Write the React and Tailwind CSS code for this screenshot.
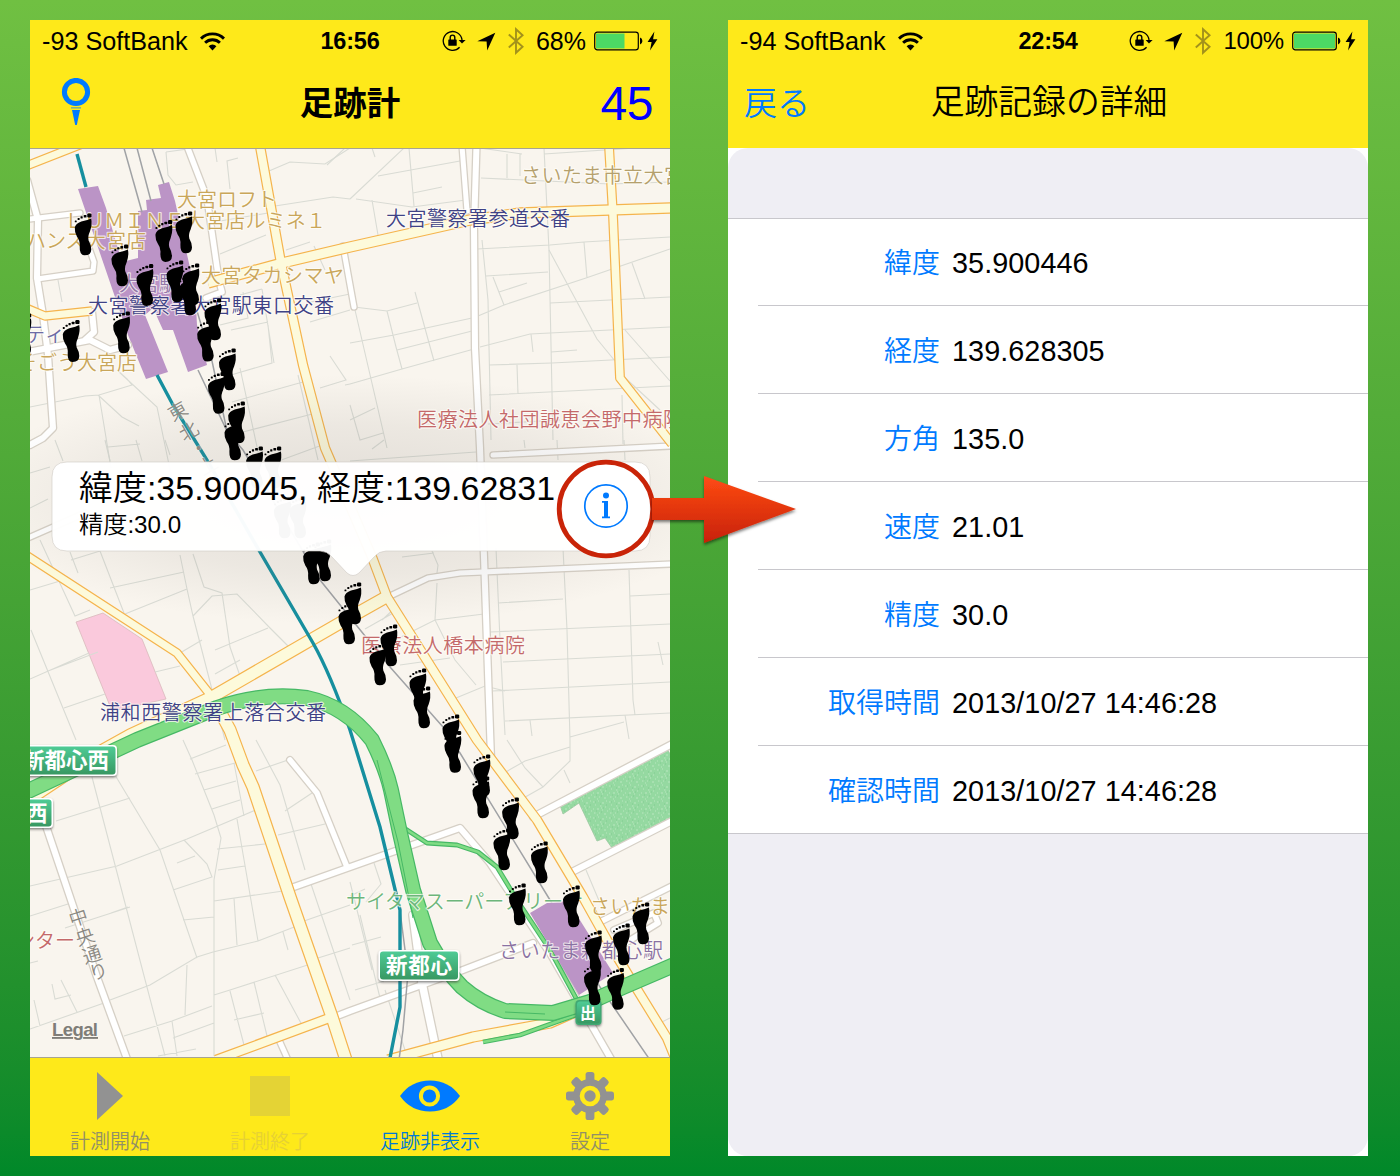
import React from "react";

const CJK = "font-['Liberation_Sans','Noto_Sans_CJK_JP',sans-serif]";

/* ---------- Status bar ---------- */

function Wifi() {
  return (
    <svg width="25" height="19" viewBox="0 0 25 19" className="ml-3 shrink-0">
      <g fill="none" stroke="#000" strokeWidth="2.9">
        <path d="M1 6.6A16.4 16.4 0 0 1 24 6.6" />
        <path d="M5.1 10.7A10.6 10.6 0 0 1 19.9 10.7" />
      </g>
      <path d="M8.6 14.2A5.6 5.6 0 0 1 16.4 14.2L12.5 18.4Z" />
    </svg>
  );
}

function RotationLock() {
  return (
    <svg width="24" height="22" viewBox="0 0 24 22" className="shrink-0">
      <path d="M17.6 17.3A9.4 9.4 0 1 1 20 10" fill="none" stroke="#000" strokeWidth="1.3" />
      <path d="M16.6 10H23.6L20 13.4Z" />
      <rect x="6.3" y="9.4" width="8.4" height="6.4" rx=".6" />
      <path d="M8.2 10V7.6A2.3 2.5 0 0 1 12.8 7.6V10" fill="none" stroke="#000" strokeWidth="1.4" />
    </svg>
  );
}

function StatusIcons({ percent, level }) {
  return (
    <div className="flex h-8 items-center justify-end">
      <RotationLock />
      <svg width="19" height="19" viewBox="0 0 19 19" className="ml-[11px] shrink-0">
        <path d="M.3 9.2L18.3.8L10.2 18.4L9.6 9.5Z" />
      </svg>
      <svg width="16" height="28" viewBox="0 0 16 28" className="ml-3 shrink-0">
        <path d="M.8 7.5L14.6 19.8L8 25.8V2.2L14.6 8.2L.8 20.5" fill="none" stroke="#a3921b" strokeWidth="1.9" />
      </svg>
      <span className={`ml-3 leading-8 ${percent.length > 3 ? "text-[24px] tracking-[-0.2px]" : "text-[25px]"}`}>{percent}</span>
      <svg width="50" height="20" viewBox="0 0 50 20" className="ml-2 shrink-0">
        <rect x=".7" y="1.2" width="43.6" height="17.6" rx="2.6" fill="none" stroke="#000" strokeWidth="1.2" />
        <rect x="2" y="2.5" width={level} height="15" fill="#4cd964" />
        <path d="M46 6.6A3.6 3.6 0 0 1 46 13.4Z" />
      </svg>
      <svg width="11" height="20" viewBox="0 0 11 20" className="ml-[3px] shrink-0">
        <path d="M7.4.6L.6 11H4.6L3 19.4L10.4 8.2H6.1Z" />
      </svg>
    </div>
  );
}

function StatusBar({ carrier, time, percent, level }) {
  return (
    <div className="grid h-10 grid-cols-[1fr_62px_1fr] items-center pl-3 pr-3 pt-[2px]">
      <div className="flex items-center">
        <span className="whitespace-nowrap text-[25.2px] leading-8">{carrier}</span>
        <Wifi />
      </div>
      <div className="whitespace-nowrap text-center text-[23.5px] font-bold leading-8 tracking-[-0.2px]">{time}</div>
      <StatusIcons percent={percent} level={level} />
    </div>
  );
}

/* ---------- Map data ---------- */

const minorStreets = [
  "M166 152L188 149M166 152L168 175L176 185L193 182M215 148L217 162M238 158L227 161L230 189M269 171L290 162L325 164L350 148",
  "M275 206L333 197L350 199M214 222L268 213M220 254L266 235M327 165L345 148",
  "M286 250L310 242M314 246L325 270M306 303L350 294M310 322L350 310M268 325L272 363L231 375M243 292L248 318L220 325M262 289L274 363M231 330L268 322M262 289L240 295M330 356L346 380L320 388M345 385L350 384",
  "M30 407L85 396L99 395L132 385L127 379L117 370L157 407L173 484M99 395L111 468M98 395L122 417L139 426M58 280L62 302M240 368L262 470M232 402L310 380M239 433L320 412M254 470L325 444M298 375L318 460",
  "M372 148L375 157M350 199L404 148M356 199L412 207L466 200M409 148L414 206M378 176L460 161M413 193L442 187M372 200L378 235M480 148L522 154M507 154V178M520 154L520 176M481 178L610 184L670 182M544 148L549 250L553 440M544 154L635 148",
  "M477 249L550 245L584 242L670 237M486 276L548 272M493 277L504 305L586 278L670 249M499 292L527 283M584 242L587 278M632 263L645 299M549 250L597 339L615 361M550 303L670 297M478 316L504 305M480 347L530 334L670 327M531 334L533 352M551 352L577 350M489 365L552 363L670 357M517 365L518 394M489 395L670 386M482 240L488 300L491 440M625 330L670 381M622 375L660 410M622 395L623 444M488 424L560 420",
  "M350 343L394 335L472 318M397 350L472 331M350 384L402 369L474 349M387 311L396 347L402 369M415 292L434 361M354 307L387 311L417 303M355 310L387 448M350 405L360 440L383 433M350 420L375 408",
  "M55 440L63 461M30 473L50 467M30 508L48 499M105 440L110 461M136 440L142 461M108 447L140 444M165 440L170 455M40 540L75 616L90 610M70 552L78 573M100 551L124 613M71 560L100 551M110 588L184 572M120 616L187 589M30 590L60 581M31 630L76 740M30 679L89 653M48 671L98 652M64 708L105 694M180 555L187 589L193 616L225 740M193 554L204 587L222 593L230 647L240 676M193 616L212 596L237 594L270 628L288 646M215 650L268 628M180 653L202 640M155 672L180 666M215 674L240 660",
  "M372 449L384 440M350 461L476 452M524 440L525 448M557 440L558 460M624 440L625 460M496 548L500 640L505 735M563 548L567 630L570 740M629 570L633 700L635 715M498 603L563 599M630 596L670 594M490 632L670 624M503 662L670 654M492 691L670 682M505 721L670 713M402 557L434 553M432 551L438 565L437 573M437 583L435 620L455 660L476 685M382 620L395 608M365 629L395 612M395 640L435 620L484 614M400 665L450 658M456 698L485 686L505 691M530 720L532 736M625 715L629 739M570 737L624 722M658 642L663 665",
  "M183 740L192 760L214 815L221 838L214 880V1056M190 759L226 745M195 774L235 763M204 790L236 781M212 809L240 800M234 763L244 816M56 821L130 798M92 777L165 1056M115 775L160 850L197 958M30 886L117 866L187 839L263 807M184 840L207 864L212 877L173 890M177 863L195 856M217 849L265 844M218 870L245 866M237 819L258 941M183 920L214 917M214 901L290 890M234 898L237 945M110 1000L150 985L197 957L213 952L258 941L302 924M111 913L128 907M30 916L68 904M65 928L130 907M187 965L185 1015M214 995L230 990L320 961M230 991L244 1045M254 982L268 1040M275 975L302 1025M234 1020L264 1013M124 1036L172 1021L212 1006M173 1038L214 1023M158 1056L196 1049M172 1021L177 1056M283 932L288 950M304 921L350 905M318 958L350 948M310 881L350 1000M256 740L280 785L305 870M256 771L288 760M278 835L325 824M285 811L312 793M30 963L38 961M52 984L55 999L71 995M61 980L77 1012M30 1029L104 1003M34 1000L40 1026",
  "M507 740L525 768L543 787L570 761V740M504 773L525 761L570 747M520 800L543 787M564 770L570 783M586 870L600 903M662 1022L670 1018M374 863L381 884L366 902M350 882L372 970M352 945L381 937M355 990L384 981M360 915L380 998M350 896L365 889M385 990L405 1050",
];

const whiteRoads = [
  ["M27 180L38 220L37 278L43 315L48 355L53 428L43 438L30 445", 6],
  ["M30 219L80 213", 5],
  ["M37 279L93 271L94 262L88 245", 5],
  ["M28 352L90 340L110 350L128 345M92 312L94 332L84 341", 6],
  ["M187 146L207 198L219 281L222 292L206 298", 5.5],
  ["M343 246L354 307", 5],
  ["M462 146L467 211", 5],
  ["M476.5 146L474 228L475 348L480 448L484 557L488 673L491 758", 6],
  ["M493 455L672 446", 5],
  ["M388 597L428 578L460 573L483 572L672 564", 5],
  ["M28 538L85 513", 5],
  ["M533 817L672 744", 6],
  ["M570 873L672 821", 6],
  ["M598 923L672 886M614 930L654 913L658 923L624 944", 5.5],
  ["M290 760L317 793L347 867", 5.5],
  ["M291 888L460 828L490 863L550 953L611 1059", 6],
  ["M332 1018L350 1011L463 970L533 943", 6],
  ["M413 915L422 983L438 1059", 7.5],
  ["M46 826L97 977L127 1059", 6],
  ["M279 1040L288 1060", 5],
];

const yellowRoads = [
  ["M26 166L95 139", 7],
  ["M260 146L281 263L303 365L325 448L372 557L387 597L477 740L537 820L583 897L607 940L627 973L667 1038L676 1060", 8],
  ["M208 283L282 263L350 247L470 220L520 213L610 210L672 208", 9],
  ["M609 146L613 215L620 378L672 444", 7.5],
  ["M26 308L45 316L92 311", 7],
  ["M26 555L177 653L212 697", 7],
  ["M28 800L103 750L130 735L212 697L340 623L388 596", 11],
  ["M212 697L230 730L243 765L253 787L290 897L332 1017L346 1060", 11],
  ["M216 1060L332 1017", 8],
  ["M388 1060L473 1037L550 1023L584 1008", 9],
];

const grayRails = [
  "M124 148L142 212", "M137 148L151 201", "M152 148L164 184",
  "M197 311L212 361L227 431", "M198 370L227 431L243 450L320 580L390 667L443 727L460 753L550 900L600 987L650 1060",
  "M400 911L408 973L403 1030L399 1060",
];

const footprints = [
  [14, 313], [74.3, 213], [111, 244], [136, 263.7], [155, 219.7], [175, 211], [166, 260], [182, 263],
  [179, 273], [204, 298], [196.7, 319.3], [218.5, 348], [207.5, 371.5], [227.7, 401], [224, 418],
  [62.3, 319.7], [112.7, 311], [245.7, 446], [264, 446], [273.5, 496], [289, 496], [302.7, 542],
  [314, 539], [344, 582], [338, 602], [380, 624], [369, 643], [409, 668], [413, 686], [442, 714],
  [444, 730.5], [473, 754], [472, 776], [501.7, 797], [493, 828], [530.5, 841], [508.5, 883],
  [562.5, 885], [584.5, 930], [612.5, 923], [632, 902], [583.5, 963], [606.7, 967.5],
];

const labels = [
  ["大宮ロフト", 177, 207, 100, "#c9a65a"],
  ["ＬＵＭＩＮＥ大宮店ルミネ１", 64, 228, 262, "#c9a65a"],
  ["ハンズ大宮店", 26, 247.5, 120, "#c9a65a"],
  ["大宮タカシマヤ", 201, 283, 143, "#c9a65a"],
  ["そごう大宮店", 17, 370, 120, "#c9a65a"],
  ["大宮駅", 119, 291, 60, "#9377a8"],
  ["ティ", 25, 342, 40, "#6d6ba6"],
  ["大宮警察署大宮駅東口交番", 88, 313, 246, "#3f4286"],
  ["さいたま市立大宮", 521, 182.5, 163, "#b5a06c"],
  ["大宮警察署参道交番", 386, 226, 184, "#3f4286"],
  ["医療法人社団誠恵会野中病院", 417, 427, 266, "#c4696a"],
  ["医療法人橋本病院", 361, 653, 164, "#c4696a"],
  ["浦和西警察署上落合交番", 100, 720, 226, "#3f4286"],
  ["サイタマスーパーアリーナ", 346, 909, 237, "#6db67b"],
  ["さいたま", 590, 913.5, 80, "#c9a65a"],
  ["さいたま新都心駅", 499, 958, 164, "#8a72a3"],
  ["ンター", 15, 947.5, 60, "#c4696a"],
];

const streetNames = [
  ["中", 78, 916, -18], ["央", 84.5, 935, -18], ["通", 91.5, 953, -18], ["り", 98, 970, -18],
  ["東", 177, 410, -30], ["北", 188, 430, -30], ["・", 198, 447, -30], ["上", 207, 464, -30],
];

const signs = [
  [6, 745, 111, 31, "新都心西", 23, 86],
  [-20, 798, 73, 30, "西", 26, 21],
  [378.5, 950, 81, 31, "新都心", 386, 66],
  [575.5, 1000, 26, 25, "出", 580, 16],
];

function MapView() {
  return (
    <svg width="640" height="908" viewBox="30 149 640 908" className="block bg-[#f9f5ee]">
      <defs>
        <linearGradient id="sign" x1="0" y1="0" x2="0" y2="1">
          <stop offset="0" stopColor="#4ecb95" />
          <stop offset="1" stopColor="#389862" />
        </linearGradient>
        <pattern id="grass" width="16" height="16" patternUnits="userSpaceOnUse">
          <rect width="16" height="16" fill="#95d9a1" />
          <path d="M1 2h1.5M6 1h1M10 3h2M14 1h1M3 5h1M8 6h1.5M13 7h1M1 9h1M5 9h2M10 10h1M15 11h1M2 13h1.5M7 13h1M12 14h2M5 15h1M9 8h1" stroke="#b9e7bf" strokeWidth="1.1" />
          <path d="M3 2h1M8 4h1M11 8h1M4 11h1M9 12h1M14 5h1" stroke="#82cb92" strokeWidth="1" />
        </pattern>
        <g id="foot">
          <path d="M16.9 5.4L13 7L7 8.6Q1.2 10.6 .5 14.6Q.2 20 2.6 23.5Q6 28 5.4 33.5Q5 42 10.2 42.3Q16.8 42.4 17 36.4Q16.8 31.6 14.3 27.5Q13.2 23.5 15.6 18.5Q18.2 11 16.9 5.4Z" />
          <rect x="13" y=".4" width="4.2" height="4" rx="1.2" />
          <rect x="9.4" y="2" width="2.8" height="2.6" rx=".6" />
          <rect x="6.2" y="3.3" width="2.2" height="2.2" rx=".5" />
          <rect x="3.3" y="5" width="2" height="2" rx=".5" />
          <rect x=".5" y="7.4" width="1.9" height="1.9" rx=".5" />
        </g>
        <radialGradient id="shade">
          <stop offset="0" stopColor="#6b6460" stopOpacity=".17" />
          <stop offset=".6" stopColor="#6b6460" stopOpacity=".09" />
          <stop offset="1" stopColor="#6b6460" stopOpacity="0" />
        </radialGradient>
        <filter id="signShadow" x="-20%" y="-20%" width="140%" height="150%">
          <feDropShadow dx="0" dy="1.5" stdDeviation="1" floodColor="#333" floodOpacity=".6" />
        </filter>
      </defs>

      <path d="M76 622L103 613L142 639L166 699L112 711Z" fill="#fac9dc" stroke="#d9b9bb" strokeWidth=".8" />
      <path d="M560 805L667 749L672 757V820L612 848L605 838L597 841L579 803L563 814Z" fill="url(#grass)" stroke="#9cc7a0" strokeWidth=".8" />
      <g fill="none" stroke="#d9dbd4" strokeWidth="1.1">
        {minorStreets.map((d) => <path key={d} d={d} />)}
      </g>
      <path d="M78 189L98 186L106 208L122 262L138 258V211L147 210L146 200L161 198L158 185L169 182L175 201L195 290L197 325L207 365L188 372L173 330H163L153 308L145 315L168 372L146 379L128 335Z" fill="#bb94c6" />

      <g fill="none" strokeLinecap="round" strokeLinejoin="round">
        {whiteRoads.map(([d, w]) => <path key={d} d={d} stroke="#d6d0c6" strokeWidth={w + 2.6} />)}
        {whiteRoads.map(([d, w]) => <path key={d} d={d} stroke="#fff" strokeWidth={w} />)}
      </g>
      <g fill="none" strokeLinejoin="round">
        {yellowRoads.map(([d, w]) => <path key={d} d={d} stroke="#f5b44d" strokeWidth={w + 2.4} />)}
        {yellowRoads.map(([d, w]) => <path key={d} d={d} stroke="#fdfadb" strokeWidth={w} />)}
      </g>
      <g fill="none" stroke="#a0a2a5" strokeWidth="1.5">
        {grayRails.map((d) => <path key={d} d={d} />)}
      </g>
      <g fill="none" stroke="#168f9f" strokeWidth="3.4">
        <path d="M77 154L86 187" />
        <path d="M157 375Q165 390 173 405L207 460L260 552L313 643Q330 673 350 730L380 827L400 910V1007L390 1058" />
      </g>
      <g fill="none" strokeLinejoin="round">
        <path d="M404 828L427 843L457 845L478 852L497 867L517 900L550 950L577 1000M584 1012L520 1035L483 1042" stroke="#46b865" strokeWidth="4.8" />
        <path d="M404 828L427 843L457 845L478 852L497 867L517 900L550 950L577 1000M584 1012L520 1035L483 1042" stroke="#80dc84" strokeWidth="2.6" />
        <path d="M26 792L137 740L217 708Q263 692 307 698Q345 706 372 740Q386 768 391 790L400 833L413 890L430 943Q445 970 462 987Q480 1003 505 1011L553 1013L590 1002L623 987L674 965" stroke="#46b865" strokeWidth="16" />
        <path d="M26 792L137 740L217 708Q263 692 307 698Q345 706 372 740Q386 768 391 790L400 833L413 890L430 943Q445 970 462 987Q480 1003 505 1011L553 1013L590 1002L623 987L674 965" stroke="#80dc84" strokeWidth="13.6" />
        <path d="M377 760L398 842L413 918M505 1012L545 1014" stroke="#46b865" strokeWidth="1" />
      </g>
      <path d="M530 913L547 903L568 901L613 973L579 995Z" fill="#bb94c6" />

      <ellipse cx="350" cy="500" rx="390" ry="125" fill="url(#shade)" />

      <g className="font-['Noto_Sans_CJK_JP',sans-serif]" fontSize="20" fontWeight="350" stroke="#fffdf8" strokeOpacity=".75" strokeWidth="2.2" strokeLinejoin="round" paintOrder="stroke">
        {labels.map(([text, x, y, w, color]) => (
          <text key={text} x={x} y={y} textLength={w} fill={color}>{text}</text>
        ))}
        {streetNames.map(([text, x, y, a]) => (
          <text key={text} x={x} y={y} fontSize="19" fill="#8b8983" textAnchor="middle" dominantBaseline="central" strokeOpacity=".4" strokeWidth="1.5" transform={`rotate(${a} ${x} ${y})`}>{text}</text>
        ))}
      </g>

      <g className="font-['Noto_Sans_CJK_JP',sans-serif]" fontWeight="700">
        {signs.map(([x, y, w, h, text, tx, tw]) => (
          <g key={text}>
            <rect x={x} y={y} width={w} height={h} rx="4" fill={text === "出" ? "#3fa873" : "#fff"} filter="url(#signShadow)" />
            <rect x={x + 1.5} y={y + 1.5} width={w - 3} height={h - 3} rx="3" fill="url(#sign)" />
            <text x={tx} y={y + h / 2 + (text === "出" ? 6 : 7.5)} fontSize={text === "出" ? 16 : 21.5} textLength={tw} fill="#fff">{text}</text>
          </g>
        ))}
      </g>

      <g>
        {footprints.map(([x, y]) => <use key={`${x}-${y}`} href="#foot" x={x} y={y} />)}
      </g>
      <text x="52" y="1036" textLength="46" fontSize="18.5" fontWeight="700" fill="#7f7d78" textDecoration="underline" className="font-['Liberation_Sans',sans-serif]">Legal</text>
    </svg>
  );
}

function Callout() {
  return (
    <div className="absolute left-[22px] top-[313px] h-[89px] w-[598px]">
      <svg width="598" height="116" viewBox="0 0 598 116" className="absolute left-0 top-0 overflow-visible">
        <path d="M15 0H583Q598 0 598 15V74Q598 89 583 89H334Q327 89 322 95L307 111Q301 116 295 111L280 95Q275 89 268 89H15Q0 89 0 74V15Q0 0 15 0Z" fill="#fff" fillOpacity=".97" stroke="#cfc9c3" strokeWidth=".6" />
      </svg>
      <div className="relative flex h-full flex-col pl-[27px] font-[350] text-black">
        <div className="mt-[6px] h-10 whitespace-nowrap text-[33.9px] leading-10 tracking-[0.05px]">緯度:35.90045, 経度:139.62831</div>
        <div className="mt-px h-8 whitespace-nowrap text-[24.2px] leading-8">精度:30.0</div>
      </div>
    </div>
  );
}

/* ---------- Tab bar ---------- */

function Gear() {
  return (
    <svg width="48" height="48" viewBox="-24 -24 48 48">
      <g fill="#929292">
        {[0, 45, 90, 135, 180, 225, 270, 315].map((a) => (
          <rect key={a} x="-4.4" y={a % 90 ? -23.6 : -24} width="8.8" height="12" rx="2.6" transform={`rotate(${a})`} />
        ))}
        <circle r="17" />
      </g>
      <circle r="8" fill="none" stroke="#fee91a" strokeWidth="4.6" />
    </svg>
  );
}

const tabs = [
  {
    label: "計測開始", color: "text-[#929066]",
    icon: <svg width="48" height="48" viewBox="0 0 48 48"><path d="M11 0L37 24L11 48Z" fill="#929292" /></svg>,
  },
  {
    label: "計測終了", color: "text-[#e6d134]",
    icon: <div className="h-10 w-10 bg-[#e4d335]" />,
  },
  {
    label: "足跡非表示", color: "text-[#007ad6]",
    icon: (
      <svg width="60" height="48" viewBox="0 0 60 48">
        <path d="M0 24Q11 8.5 30 8.5T60 24Q49 39.5 30 39.5T0 24Z" fill="#007aff" />
        <circle cx="29.5" cy="24" r="8.6" fill="none" stroke="#fee91a" strokeWidth="4" />
      </svg>
    ),
  },
  { label: "設定", color: "text-[#929066]", icon: <Gear /> },
];

function TabBar() {
  return (
    <div className="grid h-[99px] grid-cols-4 border-t border-[#a8a491] bg-[#fee91a]">
      {tabs.map((t) => (
        <div key={t.label} className="flex flex-col items-center pt-[14px]">
          <div className="flex h-12 items-center justify-center">{t.icon}</div>
          <div className={`mt-2 whitespace-nowrap text-[20px] font-[350] leading-7 ${t.color}`}>{t.label}</div>
        </div>
      ))}
    </div>
  );
}

/* ---------- Screens ---------- */

function MapScreen() {
  return (
    <div className="flex h-[1136px] w-[640px] flex-col overflow-hidden bg-[#fee91a]">
      <StatusBar carrier="-93 SoftBank" time="16:56" percent="68%" level={28.5} />
      <div className="grid h-[89px] grid-cols-[1fr_auto_1fr] items-center border-b border-[#a8a491] px-[17px]">
        <svg width="30" height="48" viewBox="0 0 30 48" className="ml-[14px] -mt-[4px]">
          <circle cx="15" cy="14" r="11.6" fill="none" stroke="#007aff" strokeWidth="5" />
          <path d="M11 32H19L15.8 47H14.2Z" fill="#007aff" />
          <path d="M10 29.8H20" stroke="#007aff" strokeOpacity=".5" strokeWidth="1.6" />
        </svg>
        <div className="text-[33.5px] font-bold leading-10">足跡計</div>
        <div className="-mt-px text-right text-[48px] leading-[50px] tracking-[-0.5px] text-[#0000ff]">45</div>
      </div>
      <div className="relative h-[908px]">
        <MapView />
        <Callout />
      </div>
      <TabBar />
    </div>
  );
}

const rows = [
  ["緯度", "35.900446"],
  ["経度", "139.628305"],
  ["方角", "135.0"],
  ["速度", "21.01"],
  ["精度", "30.0"],
  ["取得時間", "2013/10/27 14:46:28"],
  ["確認時間", "2013/10/27 14:46:28"],
];

function DetailScreen() {
  return (
    <div className="flex h-[1136px] w-[640px] flex-col overflow-hidden bg-white">
      <div className="h-32 bg-[#fee91a]">
        <StatusBar carrier="-94 SoftBank" time="22:54" percent="100%" level={41} />
        <div className="grid h-[88px] grid-cols-[1fr_auto_1fr] items-center px-4 font-[350]">
          <div className="text-[33px] leading-10 text-[#007aff]">戻る</div>
          <div className="-mt-[5px] pl-[2px] text-[33.8px] leading-10">足跡記録の詳細</div>
          <div />
        </div>
      </div>
      <div className="flex flex-1 flex-col overflow-hidden rounded-[20px] bg-[#efeef4]">
        <div className="h-[71px] border-b border-[#c8c7cc]" />
        <div className="bg-white">
          {rows.map(([label, value], i) => (
            <div key={label} className={`flex ${i === 0 ? "h-[87px]" : "h-[88px]"} ${i === rows.length - 1 ? "border-b border-[#c8c7cc]" : "pl-[30px]"}`}>
              <div className={`flex flex-1 items-center pt-[2px] ${i === rows.length - 1 ? "pl-[30px]" : "border-b border-[#c8c7cc]"}`}>
                <div className="w-[182px] pt-[2px] text-right text-[28px] font-[350] leading-10 text-[#007aff]">{label}</div>
                <div className="ml-3 text-[28.8px] leading-10 tracking-[0.05px]">{value}</div>
              </div>
            </div>
          ))}
        </div>
      </div>
    </div>
  );
}

function Annotation() {
  return (
    <svg width="260" height="120" viewBox="550 449 260 120" className="absolute left-[550px] top-[449px]">
      <defs>
        <linearGradient id="arrow" x1="0" y1="0" x2="0" y2="1">
          <stop offset="0" stopColor="#ff4b14" />
          <stop offset="1" stopColor="#c72106" />
        </linearGradient>
        <filter id="arrowShadow" x="-10%" y="-10%" width="120%" height="130%">
          <feDropShadow dx="0" dy="2" stdDeviation="1.6" floodColor="#000" floodOpacity=".5" />
        </filter>
      </defs>
      <circle cx="606" cy="509" r="44.6" fill="#fff" />
      <circle cx="606" cy="509" r="46.8" fill="none" stroke="#c92408" strokeWidth="4.8" />
      <circle cx="606" cy="506" r="21.2" fill="none" stroke="#007aff" strokeWidth="1.7" />
      <circle cx="606" cy="495.6" r="3" fill="#007aff" />
      <path d="M602 501H608V516.6H610V518.3H602V516.6H604V502.7H602Z" fill="#007aff" />
      <path d="M652 498H704V476L796 509L704 543V520H652Z" fill="url(#arrow)" filter="url(#arrowShadow)" />
    </svg>
  );
}

export default function App() {
  return (
    <div className={`relative flex h-[1176px] w-[1400px] gap-[58px] overflow-hidden bg-linear-to-b from-[#70c042] to-[#008829] px-[30px] pt-5 text-black ${CJK}`}>
      <MapScreen />
      <DetailScreen />
      <Annotation />
    </div>
  );
}
